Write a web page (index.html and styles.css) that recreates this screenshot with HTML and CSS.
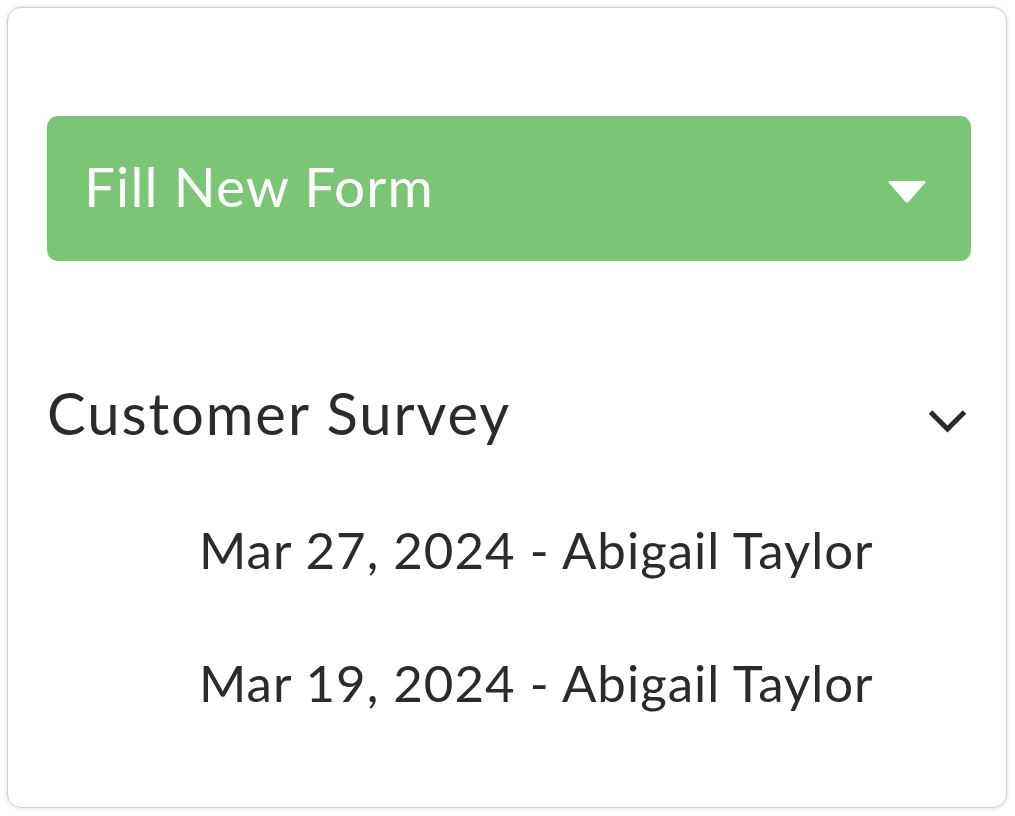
FILE: index.html
```html
<!DOCTYPE html>
<html>
<head>
<meta charset="utf-8">
<link rel="stylesheet" href="styles.css">
</head>
<body>
<div class="card">
  <button class="fill-btn">
    <span class="fill-label">Fill New Form</span>
    <svg class="caret" width="40" height="24" viewBox="0 0 40 24"><path d="M3 1 H37 Q39.5 1 38 3 L21.5 22 Q20 23.5 18.5 22 L2 3 Q0.5 1 3 1 Z" fill="#fff"/></svg>
  </button>
  <div class="group">
    <div class="group-head">
      <span class="group-title">Customer Survey</span>
      <svg class="chev" width="42" height="26" viewBox="0 0 42 26"><path d="M3.5 4 L20.5 21 L37.5 4" fill="none" stroke="#2b2b2b" stroke-width="5" stroke-linecap="butt" stroke-linejoin="miter"/></svg>
    </div>
    <ul class="entries">
      <li class="entry">Mar 27, 2024 - Abigail Taylor</li>
      <li class="entry">Mar 19, 2024 - Abigail Taylor</li>
    </ul>
  </div>
</div>
</body>
</html>
```

FILE: styles.css
```css
html, body {
  margin: 0;
  padding: 0;
  background: #ffffff;
}
body {
  font-family: "Lato", "Liberation Sans", sans-serif;
  color: #2b2b2b;
}
.card {
  box-sizing: border-box;
  margin: 7px 8px 8px 7px;
  height: 801px;
  border: 1px solid #cfcfcf;
  border-radius: 14px;
  box-shadow: 0 0 4px rgba(0,0,0,0.16);
  padding: 108px 35px 0 39px;
  display: flex;
  flex-direction: column;
}
.fill-btn {
  display: flex;
  align-items: center;
  justify-content: space-between;
  height: 145px;
  border: none;
  border-radius: 11px;
  background: #7bc577;
  color: #ffffff;
  padding: 0 44px 6px 37px;
  font-family: inherit;
  cursor: pointer;
}
.fill-label {
  font-size: 55px;
  line-height: 66px;
  font-weight: 400;
  letter-spacing: 1.1px;
}
.caret {
  display: block;
  margin-top: 12px;
}
.group {
  margin-top: 116px;
}
.group-head {
  display: flex;
  align-items: center;
  justify-content: space-between;
  padding-right: 2px;
}
.group-title {
  font-size: 58px;
  line-height: 72px;
  letter-spacing: 1.9px;
}
.chev {
  display: block;
  margin-top: 15px;
}
.entries {
  list-style: none;
  margin: 0;
  padding: 0 0 0 152px;
}
.entry {
  font-size: 51px;
  line-height: 64px;
  letter-spacing: 1px;
  margin-top: 69px;
}
```
